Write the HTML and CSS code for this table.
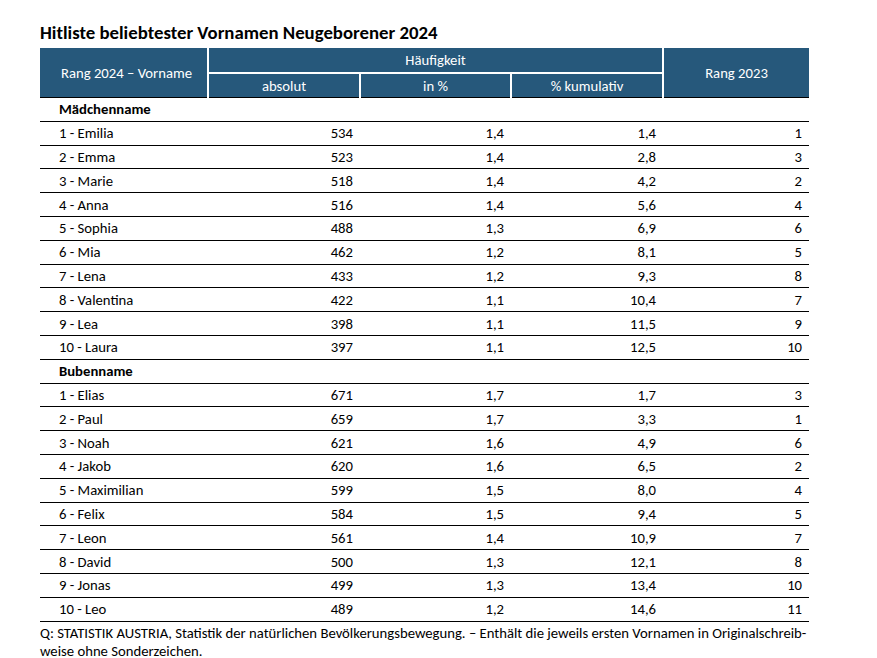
FILE: index.html
```html
<!DOCTYPE html>
<html lang="de">
<head>
<meta charset="utf-8">
<title>Hitliste beliebtester Vornamen Neugeborener 2024</title>
<link rel="stylesheet" href="styles.css">
</head>
<body>
<div class="page">
<h1 class="title">Hitliste beliebtester Vornamen Neugeborener 2024</h1>
<table class="tbl">
<colgroup><col class="c1"><col class="c2"><col class="c3"><col class="c4"><col class="c5"></colgroup>
<thead>
<tr class="h1"><th rowspan="2" class="hname">Rang 2024 – Vorname</th><th colspan="3" class="hgroup">Häufigkeit</th><th rowspan="2" class="hlast">Rang 2023</th></tr>
<tr class="h2"><th>absolut</th><th>in %</th><th>% kumulativ</th></tr>
</thead>
<tbody>
<tr class="sec"><td colspan="5">Mädchenname</td></tr>
<tr><td>1 - Emilia</td><td>534</td><td>1,4</td><td>1,4</td><td>1</td></tr>
<tr><td>2 - Emma</td><td>523</td><td>1,4</td><td>2,8</td><td>3</td></tr>
<tr><td>3 - Marie</td><td>518</td><td>1,4</td><td>4,2</td><td>2</td></tr>
<tr><td>4 - Anna</td><td>516</td><td>1,4</td><td>5,6</td><td>4</td></tr>
<tr><td>5 - Sophia</td><td>488</td><td>1,3</td><td>6,9</td><td>6</td></tr>
<tr><td>6 - Mia</td><td>462</td><td>1,2</td><td>8,1</td><td>5</td></tr>
<tr><td>7 - Lena</td><td>433</td><td>1,2</td><td>9,3</td><td>8</td></tr>
<tr><td>8 - Valentina</td><td>422</td><td>1,1</td><td>10,4</td><td>7</td></tr>
<tr><td>9 - Lea</td><td>398</td><td>1,1</td><td>11,5</td><td>9</td></tr>
<tr><td>10 - Laura</td><td>397</td><td>1,1</td><td>12,5</td><td>10</td></tr>
<tr class="sec"><td colspan="5">Bubenname</td></tr>
<tr><td>1 - Elias</td><td>671</td><td>1,7</td><td>1,7</td><td>3</td></tr>
<tr><td>2 - Paul</td><td>659</td><td>1,7</td><td>3,3</td><td>1</td></tr>
<tr><td>3 - Noah</td><td>621</td><td>1,6</td><td>4,9</td><td>6</td></tr>
<tr><td>4 - Jakob</td><td>620</td><td>1,6</td><td>6,5</td><td>2</td></tr>
<tr><td>5 - Maximilian</td><td>599</td><td>1,5</td><td>8,0</td><td>4</td></tr>
<tr><td>6 - Felix</td><td>584</td><td>1,5</td><td>9,4</td><td>5</td></tr>
<tr><td>7 - Leon</td><td>561</td><td>1,4</td><td>10,9</td><td>7</td></tr>
<tr><td>8 - David</td><td>500</td><td>1,3</td><td>12,1</td><td>8</td></tr>
<tr><td>9 - Jonas</td><td>499</td><td>1,3</td><td>13,4</td><td>10</td></tr>
<tr><td>10 - Leo</td><td>489</td><td>1,2</td><td>14,6</td><td>11</td></tr>
</tbody>
</table>
<p class="note">Q: STATISTIK AUSTRIA, Statistik der natürlichen Bevölkerungsbewegung. – Enthält die jeweils ersten Vornamen in Originalschreib-<br>weise ohne Sonderzeichen.</p>
</div>
</body>
</html>
```
FILE: styles.css
```css
html, body {
  margin: 0;
  padding: 0;
  background: #ffffff;
}
body {
  font-family: Carlito, "Open Sans", Lato, "Liberation Sans", sans-serif;
  color: #000;
}
.page {
  width: 769px;
  padding: 21px 0 0 40px;
}
.title {
  margin: 0;
  font-size: 18.8px;
  font-weight: bold;
  line-height: 24px;
  height: 27px;
}
.tbl {
  width: 769px;
  border-collapse: collapse;
  table-layout: fixed;
  font-size: 14.7px;
}
.c1 { width: 168px; }
.c2 { width: 152px; }
.c3 { width: 151px; }
.c4 { width: 152px; }
.c5 { width: 146px; }
.tbl thead th {
  background: #26587b;
  color: #fff;
  font-weight: normal;
  padding: 0;
  text-align: center;
  line-height: 18px;
}
.h1 th { height: 24px; }
.h2 th { height: 23px; }
.hname { border-right: 2px solid #fff; border-bottom: 1px solid #000; padding-left: 6px !important; }
.hlast { border-left: 2px solid #fff; border-bottom: 1px solid #000; }
.hgroup { border-bottom: 2px solid #fff; }
.h2 th { border-bottom: 1px solid #000; }
.h2 th + th { border-left: 2px solid #fff; }
.tbl tbody td {
  height: 22.8px;
  padding: 0 7px 0 0;
  text-align: right;
  border-bottom: 1px solid #000;
  line-height: 18px;
}
.tbl tbody td:first-child {
  text-align: left;
  padding-left: 19px;
}
.tbl tbody .sec td {
  font-weight: bold;
}
.note {
  margin: 2px 0 0 0;
  font-size: 14.7px;
  line-height: 18px;
}
```
